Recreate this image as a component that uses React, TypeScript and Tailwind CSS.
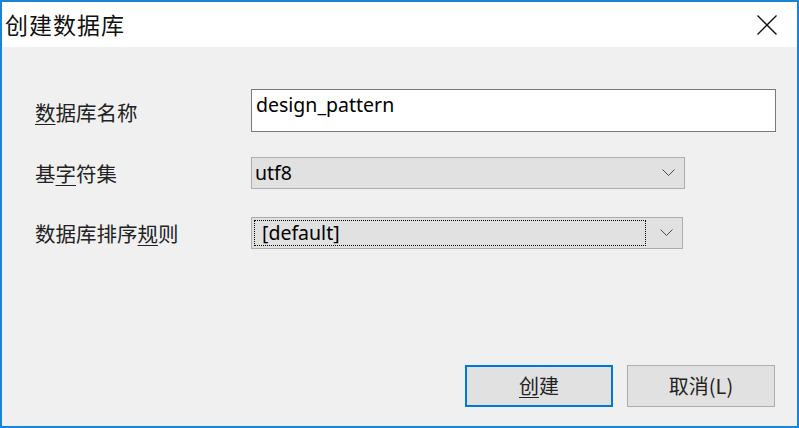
import React from "react";

const cjk = { fontFamily: '"Noto Sans CJK SC", "Noto Sans", sans-serif' };
const latin = { fontFamily: '"Noto Sans", "Noto Sans CJK SC", sans-serif' };

function Chevron() {
  return (
    <svg width="13" height="8" viewBox="0 0 13 8" className="shrink-0">
      <path d="M0.5 0.5 L6.5 6.5 L12.5 0.5" fill="none" stroke="#4a4a4a" strokeWidth="1" />
    </svg>
  );
}

export default function App() {
  return (
    <div className="w-[799px] h-[428px] border-2 border-[#1883d7] flex flex-col bg-[#f0f0f0] text-black overflow-hidden" style={cjk}>
      {/* Title bar */}
      <div className="h-[45px] bg-white flex items-center justify-between pl-[3px] pr-[20px] shrink-0">
        <span className="text-[23px] leading-none tracking-[1px] text-[#111]">创建数据库</span>
        <svg width="20" height="20" viewBox="0 0 20 20">
          <path d="M0.5 0.5 L19.5 19.5 M19.5 0.5 L0.5 19.5" stroke="#111" strokeWidth="1.4" />
        </svg>
      </div>

      {/* Body */}
      <div className="flex-1 flex flex-col pl-[33px]">
        <div className="flex items-start mt-[42px]">
          <div className="w-[216px] pt-[11px] text-[20.5px] leading-[24px] text-[#222]">
            <span className="underline underline-offset-[3px] decoration-1">数</span>据库名称
          </div>
          <div className="w-[525px] h-[43px] bg-white border border-[#7a7a7a] px-[4px] pt-[2px] text-[19.5px] leading-[26px]" style={latin}>
            design_pattern
          </div>
        </div>

        <div className="flex items-center mt-[25px]">
          <div className="w-[216px] text-[20.5px] leading-[24px] text-[#222]">
            基<span className="underline underline-offset-[3px] decoration-1">字</span>符集
          </div>
          <div className="w-[434px] h-[32px] bg-[#e1e1e1] border border-[#adadad] flex items-center justify-between pl-[3px] pr-[9px] text-[19.5px]" style={latin}>
            <span>utf8</span>
            <Chevron />
          </div>
        </div>

        <div className="flex items-center mt-[28px]">
          <div className="w-[216px] text-[20.5px] leading-[24px] text-[#222]">
            数据库排序<span className="underline underline-offset-[3px] decoration-1">规</span>则
          </div>
          <div className="w-[432px] h-[32px] bg-[#e1e1e1] border border-[#adadad] flex items-center justify-between p-[2px] pr-[9px]">
            <div className="w-[392px] h-full border border-dotted border-black flex items-center pl-[7px] text-[19.5px]" style={latin}>
              [default]
            </div>
            <Chevron />
          </div>
        </div>

        <div className="flex-1" />

        <div className="flex justify-end gap-[14px] pr-[22px] mb-[19px]">
          <div className="w-[148px] h-[42px] bg-[#e1e1e1] border-2 border-[#0078d7] flex items-center justify-center text-[20px] text-[#222]">
            <span><span className="underline underline-offset-[3px] decoration-1">创</span>建</span>
          </div>
          <div className="w-[148px] h-[42px] bg-[#e1e1e1] border border-[#adadad] flex items-center justify-center text-[20px] text-[#222]">
            取消(L)
          </div>
        </div>
      </div>
    </div>
  );
}
